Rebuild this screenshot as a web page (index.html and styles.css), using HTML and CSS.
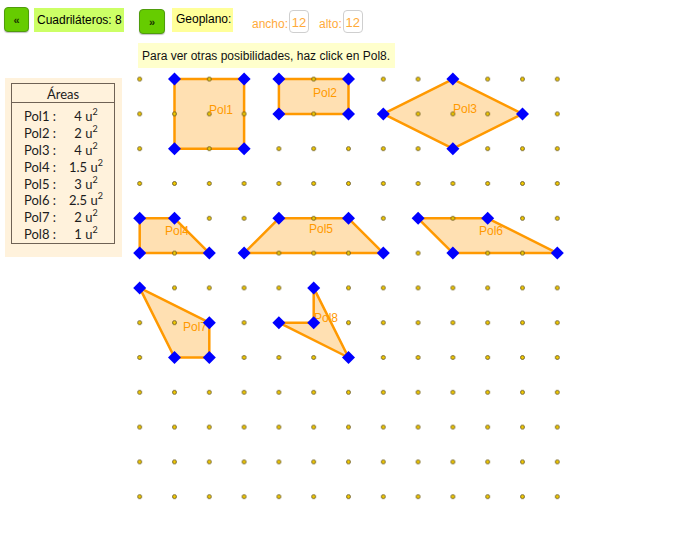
FILE: index.html
```html
<!DOCTYPE html>
<html lang="es">
<head>
<meta charset="utf-8">
<title>Geoplano</title>
<link rel="stylesheet" href="styles.css">
</head>
<body>
<div class="app">
  <div class="topbar">
    <button class="btn btn-prev">«</button>
    <span class="tag tag-green">Cuadriláteros: 8</span>
    <button class="btn btn-next">»</button>
    <span class="tag tag-yellow">Geoplano:</span>
    <span class="field field-w"><span class="field-label">ancho:</span><span class="field-box">12</span></span>
    <span class="field field-h"><span class="field-label">alto:</span><span class="field-box">12</span></span>
  </div>
  <div class="msg">Para ver otras posibilidades, haz click en Pol8.</div>
  <div class="main">
    <div class="areas">
      <div class="areas-table">
        <div class="areas-head">Áreas</div>
        <div class="areas-body">
          <div class="row"><span class="k">Pol1 :</span><span class="v">4 u<sup>2</sup></span></div>
          <div class="row"><span class="k">Pol2 :</span><span class="v">2 u<sup>2</sup></span></div>
          <div class="row"><span class="k">Pol3 :</span><span class="v">4 u<sup>2</sup></span></div>
          <div class="row"><span class="k">Pol4 :</span><span class="v">1.5 u<sup>2</sup></span></div>
          <div class="row"><span class="k">Pol5 :</span><span class="v">3 u<sup>2</sup></span></div>
          <div class="row"><span class="k">Pol6 :</span><span class="v">2.5 u<sup>2</sup></span></div>
          <div class="row"><span class="k">Pol7 :</span><span class="v">2 u<sup>2</sup></span></div>
          <div class="row"><span class="k">Pol8 :</span><span class="v">1 u<sup>2</sup></span></div>
        </div>
      </div>
    </div>
    <svg class="geo" width="440" height="440" viewBox="130 68 440 440" xmlns="http://www.w3.org/2000/svg">
      <defs>
        <pattern id="dots" x="122.3" y="61.7" width="34.8" height="34.8" patternUnits="userSpaceOnUse">
          <circle cx="17.4" cy="17.4" r="2" class="dot"/>
        </pattern>
        <path id="dm" d="M0,-6.5 L6.5,0 L0,6.5 L-6.5,0 Z" class="vtx"/>
      </defs>
      <g class="polys">
        <polygon points="174.5,79.1 244.1,79.1 244.1,148.7 174.5,148.7"/>
        <polygon points="278.9,79.1 348.5,79.1 348.5,113.9 278.9,113.9"/>
        <polygon points="383.3,113.9 452.9,79.1 522.5,113.9 452.9,148.7"/>
        <polygon points="139.7,218.3 174.5,218.3 209.3,253.1 139.7,253.1"/>
        <polygon points="244.1,253.1 278.9,218.3 348.5,218.3 383.3,253.1"/>
        <polygon points="418.1,218.3 487.7,218.3 557.3,253.1 452.9,253.1"/>
        <polygon points="139.7,287.9 209.3,322.7 209.3,357.5 174.5,357.5"/>
        <polygon points="313.7,287.9 313.7,322.7 278.9,322.7 348.5,357.5"/>
      </g>
      <rect x="130" y="68" width="440" height="440" fill="url(#dots)"/>
      <g class="labels">
        <text x="209" y="114">Pol1</text>
        <text x="313" y="97">Pol2</text>
        <text x="453" y="113">Pol3</text>
        <text x="165" y="235">Pol4</text>
        <text x="309" y="233">Pol5</text>
        <text x="479" y="235">Pol6</text>
        <text x="183" y="331">Pol7</text>
        <text x="314" y="322">Pol8</text>
      </g>
      <g class="vertices">
        <use href="#dm" x="174.5" y="79.1"/><use href="#dm" x="244.1" y="79.1"/><use href="#dm" x="244.1" y="148.7"/><use href="#dm" x="174.5" y="148.7"/>
        <use href="#dm" x="278.9" y="79.1"/><use href="#dm" x="348.5" y="79.1"/><use href="#dm" x="348.5" y="113.9"/><use href="#dm" x="278.9" y="113.9"/>
        <use href="#dm" x="383.3" y="113.9"/><use href="#dm" x="452.9" y="79.1"/><use href="#dm" x="522.5" y="113.9"/><use href="#dm" x="452.9" y="148.7"/>
        <use href="#dm" x="139.7" y="218.3"/><use href="#dm" x="174.5" y="218.3"/><use href="#dm" x="209.3" y="253.1"/><use href="#dm" x="139.7" y="253.1"/>
        <use href="#dm" x="244.1" y="253.1"/><use href="#dm" x="278.9" y="218.3"/><use href="#dm" x="348.5" y="218.3"/><use href="#dm" x="383.3" y="253.1"/>
        <use href="#dm" x="418.1" y="218.3"/><use href="#dm" x="487.7" y="218.3"/><use href="#dm" x="557.3" y="253.1"/><use href="#dm" x="452.9" y="253.1"/>
        <use href="#dm" x="139.7" y="287.9"/><use href="#dm" x="209.3" y="322.7"/><use href="#dm" x="209.3" y="357.5"/><use href="#dm" x="174.5" y="357.5"/>
        <use href="#dm" x="313.7" y="287.9"/><use href="#dm" x="313.7" y="322.7"/><use href="#dm" x="278.9" y="322.7"/><use href="#dm" x="348.5" y="357.5"/>
      </g>
    </svg>
  </div>
</div>
</body>
</html>
```

FILE: styles.css
```css
* { box-sizing: border-box; }
html, body { margin: 0; padding: 0; background: #ffffff; }
body { font-family: "Liberation Sans", Arial, sans-serif; font-size: 12px; color: #000; }
.app { width: 679px; height: 548px; overflow: hidden; }

.topbar { display: flex; align-items: flex-start; height: 43px; }
.btn {
  width: 25px; height: 25px; padding: 0;
  background: #66cc00; border: 1px solid #4f9c0c; border-radius: 4px;
  box-shadow: 0 1px 1px rgba(0,0,0,0.25);
  font-family: "Liberation Sans", Arial, sans-serif; font-size: 11px; font-weight: bold;
  color: #1a3300; line-height: 22px; text-align: center;
}
.btn-prev { margin-left: 4px; margin-top: 7px; }
.btn-next { margin-left: 15px; margin-top: 9px; width: 26px; }
.tag { display: block; height: 24px; margin-top: 8px; font-size: 12px; }
.tag-green { margin-left: 5px; width: 90px; padding-left: 3px; line-height: 24px; background: #ccff66; }
.tag-yellow { margin-left: 7px; width: 61px; padding-left: 4px; line-height: 22px; background: #ffff99; }
.field { display: flex; align-items: center; margin-top: 10px; height: 23px; }
.field-w { margin-left: 19px; }
.field-h { margin-left: 10px; }
.field-label { color: #ffaa3a; font-size: 12px; padding-top: 5px; }
.field-box {
  width: 20px; height: 23px; margin-left: 1px;
  border: 1px solid #cfcfcf; border-radius: 4px;
  color: #ffaa3a; font-size: 13px; text-align: center; line-height: 24px;
}

.msg {
  margin-left: 138px; width: 257px; height: 25px;
  padding-left: 4px; padding-top: 1px; line-height: 25px;
  background: #ffffcc; font-size: 12px; color: #111;
}

.main { display: flex; align-items: flex-start; }
.areas {
  margin-left: 5px; margin-top: 10px; width: 117px; height: 179px;
  padding: 5px 0 0 6px; background: #fff2dc;
}
.areas-table {
  width: 104px; height: 161px; border: 1px solid #6f6255;
  font-family: Lato, "DejaVu Sans", sans-serif; font-size: 13px; color: #1c1c1c;
  white-space: nowrap;
}
.areas-head { height: 19px; border-bottom: 1px solid #6f6255; text-align: center; line-height: 20px; }
.areas-body { padding-top: 5px; }
.row { display: grid; grid-template-columns: 36px 1fr; height: 16.9px; line-height: 16.9px; padding-left: 12px; padding-right: 2px; }
.row .v { text-align: center; }
.row sup { font-size: 9px; line-height: 0; vertical-align: 6px; }

.geo { display: block; margin-left: 8px; flex: none; }
.polys polygon { fill: #ff9900; fill-opacity: 0.3; stroke: #ff9900; stroke-width: 2.5; stroke-linejoin: round; }
.dot { fill: #f0c800; stroke: #5a4a1a; stroke-width: 0.8; }
.labels text { font-family: "Liberation Sans", Arial, sans-serif; font-size: 12px; fill: #ff9900; }
.vtx { fill: #0000ff; }
```
